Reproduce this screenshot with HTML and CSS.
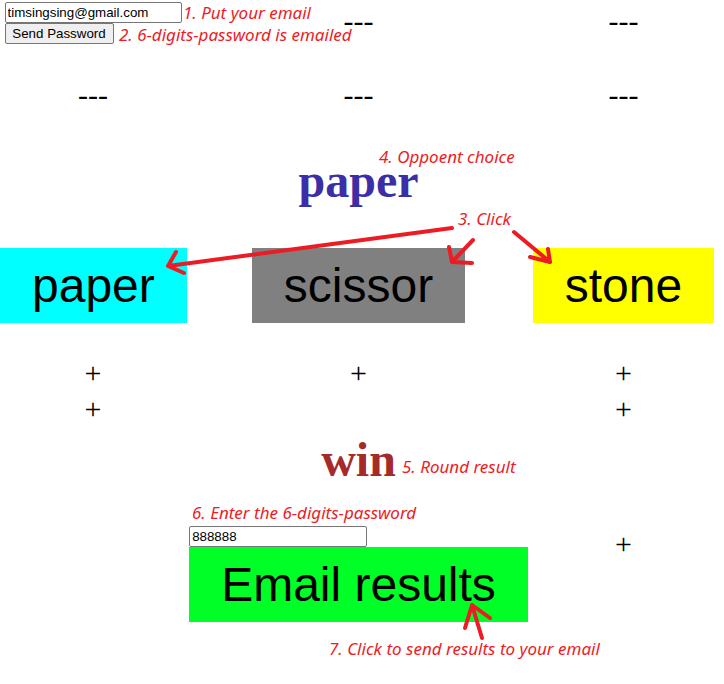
FILE: index.html
```html
<!DOCTYPE html>
<html>
<head>
<meta charset="utf-8">
<title>Paper Scissor Stone</title>
<link rel="stylesheet" href="styles.css">
</head>
<body>
<main class="board">
  <div class="row row-top">
    <div class="cell">
      <div class="stack">
        <input class="field" type="text" value="timsingsing@gmail.com">
        <button class="small-btn">Send Password</button>
      </div>
    </div>
    <div class="cell mark dash-first">---</div>
    <div class="cell mark dash-first">---</div>
  </div>

  <div class="row row-dashes">
    <div class="cell mark">---</div>
    <div class="cell mark">---</div>
    <div class="cell mark">---</div>
  </div>

  <div class="row row-opponent">
    <div class="cell"></div>
    <div class="cell"><h1 class="big opponent">paper</h1></div>
    <div class="cell"></div>
  </div>

  <div class="row row-choices">
    <div class="cell"><button class="choice cyan">paper</button></div>
    <div class="cell"><button class="choice gray">scissor</button></div>
    <div class="cell"><button class="choice yellow">stone</button></div>
  </div>

  <div class="row row-plus1">
    <div class="cell mark">+</div>
    <div class="cell mark">+</div>
    <div class="cell mark">+</div>
  </div>

  <div class="row">
    <div class="cell mark">+</div>
    <div class="cell mark"></div>
    <div class="cell mark">+</div>
  </div>

  <div class="row row-result">
    <div class="cell"></div>
    <div class="cell"><h2 class="big result">win</h2></div>
    <div class="cell"></div>
  </div>

  <div class="row row-send">
    <div class="cell"></div>
    <div class="cell">
      <div class="stack stack-send">
        <input class="field field-pass" type="text" value="888888">
        <button class="choice green">Email results</button>
      </div>
    </div>
    <div class="cell mark plus-last">+</div>
  </div>
</main>

<div class="note n1">1. Put your email</div>
<div class="note n2">2. 6-digits-password is emailed</div>
<div class="note n4">4. Oppoent choice</div>
<div class="note n3">3. Click</div>
<div class="note n5">5. Round result</div>
<div class="note n6">6. Enter the 6-digits-password</div>
<div class="note n7">7. Click to send results to your email</div>

<svg class="arrows" width="724" height="684" viewBox="0 0 724 684" xmlns="http://www.w3.org/2000/svg">
  <g fill="none" stroke="#ED1C24" stroke-width="4" stroke-linecap="round" stroke-linejoin="round">
    <path d="M452 228 L168 266 M176 252 L168 266 L184 273"/>
    <path d="M473 240 L452 262 M449 247 L452 262 L472 263"/>
    <path d="M514 232 L550 262 M548 249 L550 262 L530 257"/>
    <path d="M482 638 L472 605 M465 628 L472 605 L490 618"/>
  </g>
</svg>
</body>
</html>
```

FILE: styles.css
```css
html, body {
  margin: 0;
  padding: 0;
  background: #ffffff;
}

body {
  position: relative;
  width: 724px;
  height: 684px;
  overflow: hidden;
  font-family: "Liberation Serif", "Times New Roman", serif;
  color: #000;
}

.board {
  display: flex;
  flex-direction: column;
}

.row {
  display: grid;
  grid-template-columns: 186px 345px 185px;
  align-items: start;
}

.cell {
  text-align: center;
}

.mark {
  font-size: 30px;
  line-height: 36px;
  height: 36px;
}

.dash-first {
  padding-top: 3px;
}

.stack {
  display: inline-flex;
  flex-direction: column;
  align-items: flex-start;
  text-align: left;
  padding-top: 2px;
}

.field {
  box-sizing: border-box;
  width: 177px;
  height: 21px;
  margin: 0;
  padding: 1px 2px;
  border: 1px solid #767676;
  border-radius: 2px;
  font-family: "Liberation Sans", Arial, sans-serif;
  font-size: 13.33px;
  color: #000;
  background: #fff;
}

.small-btn {
  box-sizing: border-box;
  width: 109px;
  height: 21px;
  margin: 0;
  padding: 0 6px;
  border: 1px solid #767676;
  border-radius: 2px;
  background: #efefef;
  font-family: "Liberation Sans", Arial, sans-serif;
  font-size: 13.33px;
  color: #000;
}

.row-dashes { margin-top: 33px; }
.row-opponent { margin-top: 40px; }
.row-choices { margin-top: 39px; }
.row-plus1 { margin-top: 32px; }
.row-result { margin-top: 5px; }
.row-send { margin-top: 35px; }

.plus-last {
  padding-top: 3px;
}

.big {
  margin: 0;
  font-family: "Liberation Serif", "Times New Roman", serif;
  font-weight: bold;
  font-size: 48px;
  line-height: 56px;
  height: 56px;
}

.opponent { color: #3c2ea6; }
.result { color: #a52a2a; }

.choice {
  margin: 0;
  border: none;
  border-radius: 0;
  padding: 10px 32px;
  font-family: "Liberation Sans", Arial, sans-serif;
  font-size: 48px;
  line-height: 55px;
  color: #000;
}

.cyan { background: #00ffff; }
.gray { background: #808080; }
.yellow { background: #ffff00; }
.green { background: #00ff26; }

.stack-send {
  padding-top: 3px;
}

.field-pass {
  width: 178px;
}

.note {
  position: absolute;
  font-family: "Noto Sans", "Open Sans", sans-serif;
  font-style: italic;
  font-size: 17px;
  line-height: 17px;
  color: #ED1C24;
  white-space: nowrap;
}

.n1 { left: 183px; top: 4px; }
.n2 { left: 119px; top: 26px; }
.n4 { left: 379px; top: 148px; }
.n3 { left: 458px; top: 210px; }
.n5 { left: 402px; top: 458px; }
.n6 { left: 192px; top: 504px; }
.n7 { left: 329px; top: 640px; }

.arrows {
  position: absolute;
  left: 0;
  top: 0;
  pointer-events: none;
}
```
